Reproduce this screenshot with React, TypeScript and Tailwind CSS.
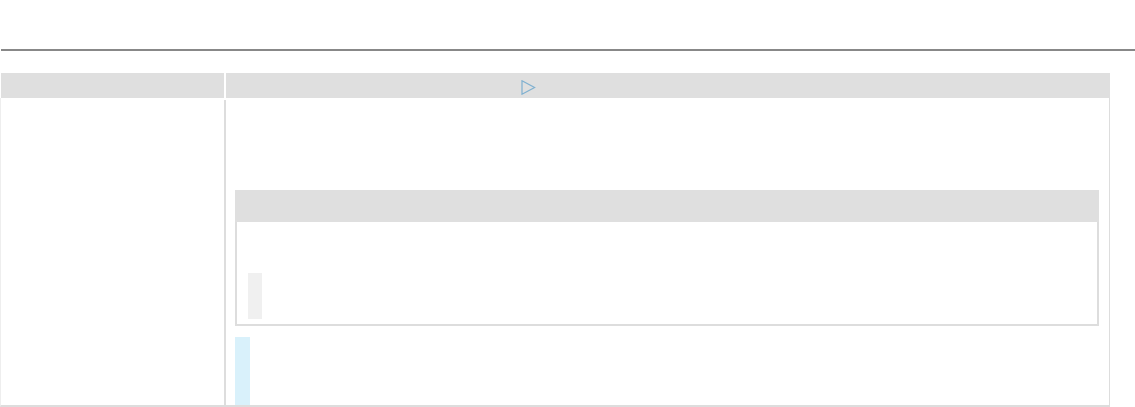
export default function App() {
  return (
    <div className="w-[1135px] h-[407px] bg-white overflow-hidden font-['Liberation_Sans',sans-serif]">
      {/* top rule */}
      <div className="pt-[49px] pl-px">
        <div className="h-[2px] bg-[#888888]" />
      </div>

      {/* table */}
      <div className="mt-[22px] w-[1110px]">
        <div className="flex h-[25px] gap-[2px] pl-px">
          <div className="w-[223px] bg-[#dfdfdf]" />
          <div className="flex-1 bg-[#dfdfdf] relative">
            <svg
              className="absolute left-[295px] top-[7px]"
              width="15"
              height="15"
              viewBox="0 0 15 15"
              fill="none"
            >
              <path d="M1 0.8 L13.6 7.5 L1 14.2 Z" stroke="#7fb0d0" strokeWidth="1.2" strokeLinejoin="miter" />
            </svg>
          </div>
        </div>

        <div className="flex h-[309px] border-b-2 border-[#dddddd] border-l border-l-[#eeeeee]">
          <div className="w-[223px]" />
          <div className="mt-[2px] w-[2px] bg-[#dddddd]" />
          <div className="flex-1 border-r border-[#dddddd] pl-[9px] pr-[10px] pt-[92px] flex flex-col">
            <div className="w-[864px]">
              <div className="h-[32px] bg-[#dfdfdf]" />
              <div className="h-[104px] border-l-2 border-r-2 border-b-2 border-[#dddddd] pl-[11px] pt-[51px]">
                <div className="w-[14px] h-[46px] bg-[#f0f0f0]" />
              </div>
            </div>
            <div className="mt-[11px] w-[15px] flex-1 bg-[#d9f1fb]" />
          </div>
        </div>
      </div>
    </div>
  );
}
